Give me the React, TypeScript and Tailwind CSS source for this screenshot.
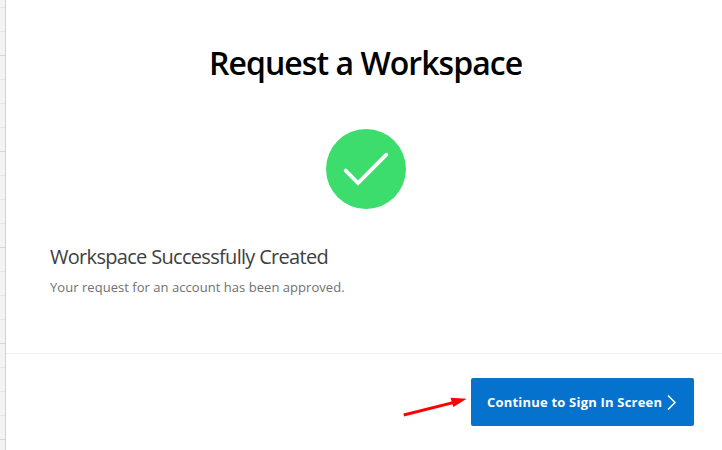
const gridLines = Array.from({ length: 19 }, (_, i) => i);

function GridEdge() {
  return (
    <div className="h-full w-[6px] shrink-0 overflow-hidden border-r border-[#d2d2d2] bg-[#f3f3f3] pt-[7px]">
      {gridLines.map((i) => (
        <div
          key={i}
          className={`h-6 border-t ${i % 4 === 2 ? "border-[#d6d6d6]" : "border-[#e7e7e7]"}`}
        />
      ))}
    </div>
  );
}

export default function App() {
  return (
    <div className="flex h-[450px] w-[722px] overflow-hidden bg-white font-['Open_Sans','Noto_Sans',sans-serif]">
      <GridEdge />
      <div className="flex min-w-0 flex-1 flex-col">
        <main className="flex h-[354px] shrink-0 flex-col border-b border-[#f0f0f0] pl-11 pt-[42px]">
          <h1 className="h-[42px] self-start whitespace-nowrap pl-[159px] text-[32px] font-semibold leading-[42px] tracking-[-0.95px] text-black">
            Request a Workspace
          </h1>
          <div className="ml-[276px] mt-[45px] size-20 shrink-0 rounded-full bg-[#3cdd6c]">
            <svg viewBox="0 0 80 80" className="size-20" fill="none" stroke="white" strokeWidth="3.8" strokeLinecap="round">
              <path d="M19.7 41.6 32 54 60.3 25.7" strokeLinejoin="miter" />
            </svg>
          </div>
          <h2 className="mt-[34px] h-7 self-start whitespace-nowrap text-[20px] font-normal leading-7 tracking-[-0.69px] text-[#404040]">
            Workspace Successfully Created
          </h2>
          <p className="mt-[6px] h-5 self-start whitespace-nowrap text-[13px] leading-5 tracking-[0.04px] text-[#707070]">
            Your request for an account has been approved.
          </p>
        </main>
        <footer className="flex pl-[397px] pt-6">
          <svg width="68" height="48" viewBox="0 0 68 48" className="shrink-0">
            <path d="M0.4 35.6 48.6 23.4 47.6 19.8 63.6 20.8 50.4 29 49.5 26.2 1 38.6Z" fill="#ff0000" />
          </svg>
          <button className="flex h-12 w-[223px] shrink-0 items-center whitespace-nowrap rounded-[2px] bg-[#0572ce] pl-4 text-[13px] font-bold tracking-[0.2px] text-white">
            <span className="w-[180px] pt-px text-left">Continue to Sign In Screen</span>
            <svg width="10" height="16" viewBox="0 0 10 16" fill="none" stroke="white" strokeWidth="1.5">
              <path d="M1 1.5 8 8.5 1 15.5" />
            </svg>
          </button>
        </footer>
      </div>
    </div>
  );
}
